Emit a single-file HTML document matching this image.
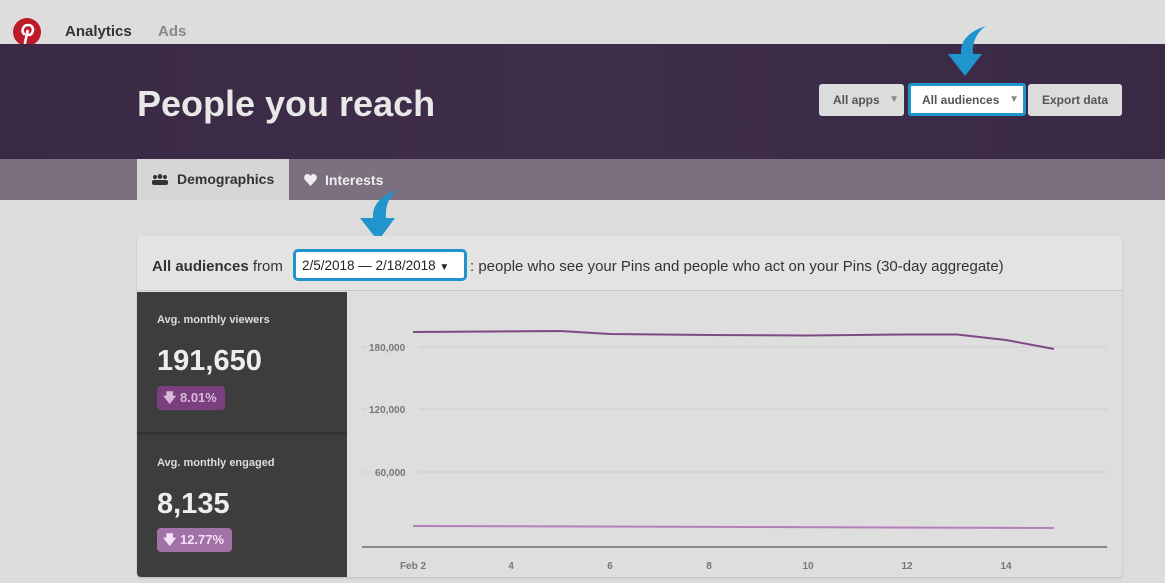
<!DOCTYPE html>
<html><head><meta charset="utf-8"><style>
*{margin:0;padding:0;box-sizing:border-box}
body{width:1165px;height:583px;overflow:hidden;background:#dcdcdc;font-family:"Liberation Sans",Arial,sans-serif;position:relative}
.abs{position:absolute}
.top{left:0;top:0;width:1165px;height:44px;background:#dddddd}
.nav{top:23px;font-size:15px;font-weight:bold}
.banner{left:0;top:44px;width:1165px;height:115px;background:linear-gradient(90deg,#3a2945,#3f2e4a 50%,#3a2944)}
.title{left:137px;top:83px;font-size:36px;font-weight:bold;color:#e8e8e8}
.btn{top:84px;height:32px;border-radius:3px;background:#dcdcdc;font-size:12px;font-weight:bold;color:#555;line-height:32px;padding-left:14px}
.tabs{left:0;top:159px;width:1165px;height:41px;background:#7b6f80}
.tab{top:160px;height:41px;line-height:41px;font-size:14px;font-weight:bold}
.card{left:137px;top:236px;width:985px;height:341px;background:#dedede;border-radius:4px;box-shadow:0 1px 2px #bbb;overflow:hidden}
.hdr{left:0;top:0;width:985px;height:55px;background:#e3e3e3;border-bottom:1px solid #c8c8c8}
.side{left:0;top:56px;width:210px;height:285px;background:#3d3d3d}
.lbl{font-size:11px;font-weight:bold;color:#ddd}
.num{font-size:29px;font-weight:bold;color:#eee}
.badge{border-radius:4px;font-size:13px;font-weight:bold;height:24px;line-height:24px;padding:0 8px 0 6px}
</style></head><body>
<div class="abs top"></div>
<svg class="abs" style="left:13px;top:18px" width="28" height="28" viewBox="0 0 28 28"><circle cx="14" cy="14" r="14" fill="#bd1b29"/><path d="M12 25 L14.5 13 M11 16 C8 13 10 7 15 7 C20 7 21 12 19 15 C17 18 14 17 14 15" stroke="#fff" stroke-width="2.6" fill="none" stroke-linecap="round"/></svg>
<div class="abs nav" style="left:65px;color:#333">Analytics</div>
<div class="abs nav" style="left:158px;color:#888">Ads</div>
<div class="abs banner"></div>
<div class="abs title">People you reach</div>
<div class="abs btn" style="left:819px;width:85px">All apps <span style="color:#888;position:absolute;right:5px;font-size:10px">▼</span></div>
<div class="abs btn" style="left:908px;width:118px;background:#fff;border:3px solid #1f94cd;line-height:28px;padding-left:11px;height:33px;top:83px">All audiences <span style="color:#888;position:absolute;right:4px;font-size:10px">▼</span></div>
<div class="abs btn" style="left:1028px;width:94px">Export data</div>
<svg class="abs" style="left:940px;top:22px" width="60" height="58"><path d="M46 4 C30 9 20 18 21 32 L8 32 L25 54 L42 32 L33 32 C32 20 37 10 46 4Z" fill="#1f94cd"/></svg>
<div class="abs tabs"></div>
<div class="abs tab" style="left:137px;width:152px;background:#d6d6d6;color:#333;padding-left:40px;top:159px">Demographics</div>
<svg class="abs" style="left:152px;top:174px" width="16" height="11"><circle cx="3" cy="3" r="2" fill="#333"/><circle cx="8" cy="2.5" r="2.4" fill="#333"/><circle cx="13" cy="3" r="2" fill="#333"/><rect x="0" y="6" width="16" height="5" rx="2" fill="#333"/></svg>
<div class="abs tab" style="left:325px;color:#eee">Interests</div>
<svg class="abs" style="left:304px;top:174px" width="13" height="12" viewBox="0 0 13 12"><path d="M6.5 12 L1 6 C-1 3 1 0 3.5 0 C5 0 6 1 6.5 2 C7 1 8 0 9.5 0 C12 0 14 3 12 6Z" fill="#eee"/></svg>
<svg class="abs" style="left:355px;top:186px" width="50" height="58"><path d="M43 4 C27 9 17 18 18 32 L5 32 L23 55 L40 32 L31 32 C30 20 34 10 43 4Z" fill="#1f94cd"/></svg>
<div class="abs card">
 <div class="abs hdr"></div>
 <div class="abs" style="left:15px;top:22px;font-size:15px;color:#333"><b>All audiences</b> from</div>
 <div class="abs" style="left:156px;top:13px;width:174px;height:32px;background:#fff;border:3px solid #1f94cd;border-radius:5px;font-size:13.5px;color:#222;line-height:28px;padding-left:6px">2/5/2018 — 2/18/2018 <span style="font-size:10px">▼</span></div>
 <div class="abs" style="left:333px;top:22px;font-size:15px;color:#333">: people who see your Pins and people who act on your Pins (30-day aggregate)</div>
 <div class="abs side"></div>
 <div class="abs" style="left:0;top:196px;width:210px;height:3px;background:#333"></div>
 <div class="abs lbl" style="left:20px;top:78px">Avg. monthly viewers</div>
 <div class="abs num" style="left:20px;top:109px">191,650</div>
 <div class="abs badge" style="left:20px;top:150px;background:#7a3f7e;color:#d9b9dc">🡇 8.01%</div>
 <div class="abs lbl" style="left:20px;top:221px">Avg. monthly engaged</div>
 <div class="abs num" style="left:20px;top:252px">8,135</div>
 <div class="abs badge" style="left:20px;top:292px;background:#a271a8;color:#f4e4f6">🡇 12.77%</div>
 <svg class="abs" style="left:210px;top:56px" width="775" height="285">
  <g stroke="#cfcfcf" stroke-width="1"><line x1="15" y1="55" x2="760" y2="55"/><line x1="15" y1="117" x2="760" y2="117"/><line x1="15" y1="180" x2="760" y2="180"/></g>
  <line x1="15" y1="255" x2="760" y2="255" stroke="#888" stroke-width="2"/>
  <g font-size="10" font-weight="bold" fill="#777" font-family="Liberation Sans,sans-serif">
   <rect x="20" y="48" width="52" height="14" fill="#dedede"/><text x="22" y="59">180,000</text>
   <rect x="20" y="110" width="52" height="14" fill="#dedede"/><text x="22" y="121">120,000</text>
   <rect x="25" y="173" width="45" height="14" fill="#dedede"/><text x="28" y="184">60,000</text>
   <g text-anchor="middle"><text x="66" y="277">Feb 2</text><text x="164" y="277">4</text><text x="263" y="277">6</text><text x="362" y="277">8</text><text x="461" y="277">10</text><text x="560" y="277">12</text><text x="659" y="277">14</text></g>
  </g>
  <polyline points="66,40 213,39 263,42 362,43 461,43.5 560,42.5 610,42.5 659,48 707,57" fill="none" stroke="#7e4a84" stroke-width="2"/>
  <polyline points="66,234 400,235 707,236" fill="none" stroke="#b47fba" stroke-width="2"/>
 </svg>
</div>
</body></html>
